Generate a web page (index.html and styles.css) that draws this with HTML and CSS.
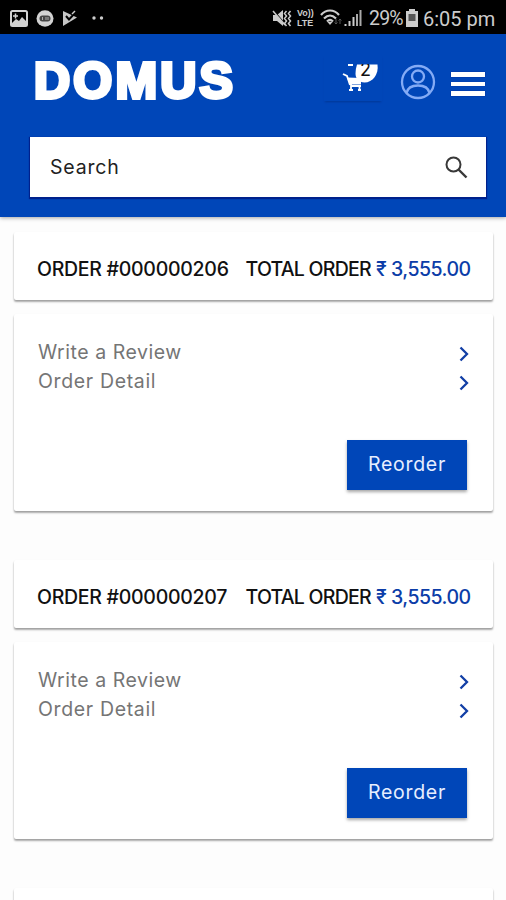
FILE: index.html
```html
<!DOCTYPE html>
<html lang="en">
<head>
<meta charset="utf-8">
<meta name="viewport" content="width=device-width, initial-scale=1">
<title>Domus - My Orders</title>
<link rel="stylesheet" href="styles.css">
</head>
<body>
<div class="status">
  <svg class="s-image" width="18" height="17" viewBox="0 0 18 17"><rect x="1" y="1" width="16" height="15" rx="1.500" fill="none" stroke="#d2d2d2" stroke-width="2"/><path d="M2 13l4-4 3 2 3-4 5 5v3H2z" fill="#d2d2d2"/><path d="M5.500 3.500v5M3 6h5" stroke="#d2d2d2" stroke-width="1.500"/></svg>
  <svg class="s-chat" width="18" height="17" viewBox="0 0 18 17"><ellipse cx="9" cy="8.500" rx="8.500" ry="8.300" fill="#d2d2d2"/><rect x="3.500" y="5.500" width="11" height="6" rx="3" fill="#444"/><path d="M6.500 7v3M10 7v3M12 7v3" stroke="#aaa"/></svg>
  <svg class="s-play" width="16" height="17" viewBox="0 0 16 17"><path d="M1 1l14 6.500L1 16z" fill="#c6c6c6"/><path d="M4 6l3 3.500L14 2" fill="none" stroke="#000" stroke-width="2"/><path d="M10 4l3-3" stroke="#ccc" stroke-width="1.500"/></svg>
  <svg class="s-dots" width="12" height="4" viewBox="0 0 12 4"><circle cx="2" cy="2" r="1.700" fill="#ccc"/><circle cx="9.500" cy="2" r="1.700" fill="#ccc"/></svg>
  <svg class="s-mute" width="20" height="19" viewBox="0 0 20 19"><path d="M1 6h4l6-5v16l-6-5H1z" fill="#ccc"/><path d="M2 2l11 13" stroke="#000" stroke-width="1.200"/><path d="M1 2l12 14" stroke="#ccc" stroke-width="1.500"/><path d="M14.500 2l-2 2.500 2 2.500-2 2.500 2 2.500-2 2.500 2 2.500M18.500 2l-2 2.500 2 2.500-2 2.500 2 2.500-2 2.500 2 2.500" fill="none" stroke="#ccc" stroke-width="1.500"/></svg>
  <div class="s-lte"><span class="vo">Vo))</span><span>LTE</span></div>
  <svg class="s-wifi" width="23" height="18" viewBox="0 0 23 18"><path d="M1 6c5-6 13-6 18 0M4 9.500c4-4 8-4 12 0M7 12.500c2-2 4-2 6 0" fill="none" stroke="#ccc" stroke-width="2.200"/><path d="M7.500 13L10 16l2.500-3z" fill="#ccc"/><path d="M16 10v5m-1.500-1.500L16 15l1.500-1.500M20 15v-5m-1.500 1.500L20 10l1.500 1.500" stroke="#555" fill="none"/></svg>
  <svg class="s-signal" width="18" height="18" viewBox="0 0 18 18"><path d="M1.500 15v2M5.500 12v5M9.500 8v9" stroke="#ccc" stroke-width="2"/><path d="M13 5v12M16.500 1v16" stroke="#aaa" stroke-width="2"/></svg>
  <span class="s-pct">29%</span>
  <svg class="s-batt" width="12" height="18" viewBox="0 0 12 18"><path d="M3 0h6v2h3v16H0V2h3z" fill="#ccc"/><path d="M2.500 5h7v7h-7z" fill="#555"/></svg>
  <span class="s-time">6:05 pm</span>
</div>

<header class="header">
  <div class="bar">
    <div class="logo">DOMUS</div>
    <div class="cart">
      <svg width="60" height="46" viewBox="0 0 60 46"><path d="M33 9.500h20.500c1.500 10-5 18-13 18-6 0-9-4-9-9 0-3 .5-6 1.500-9z" fill="#fff"/><path d="M24 10h5M19 19l4 2 3 9" fill="none" stroke="#fff" stroke-width="1.800"/><path d="M23 22.500l14 .5v6.500H26z" fill="#fff"/><path d="M27 29v6M27 31h10M25 35h4M34 35h3M35.500 31v4" fill="none" stroke="#fff" stroke-width="1.800"/></svg>
      <span class="count">2</span>
    </div>
    <svg class="user" width="36" height="36" viewBox="0 0 36 36" fill="none" stroke="#84abf5" stroke-width="2.300"><circle cx="18" cy="18" r="16"/><circle cx="18" cy="12.500" r="6"/><path d="M6.500 29c1-5 5-7.500 11.500-7.500S28.500 24 29.500 29"/></svg>
    <div class="menu"><i></i><i></i><i></i></div>
  </div>
  <div class="search">
    <span>Search</span>
    <svg width="23" height="23" viewBox="0 0 23 23" fill="none" stroke="#383838" stroke-width="2"><circle cx="8.500" cy="8.500" r="7"/><path d="M13.500 13.500l8 8" stroke-width="2.400"/></svg>
  </div>
</header>

<main class="orders">
  <section class="order">
    <div class="card summary"><span class="number">ORDER #000000206</span><span class="label">TOTAL ORDER</span><span class="price">₹ 3,555.00</span></div>
    <div class="card detail">
      <div class="row"><span class="review">Write a Review</span><svg width="10" height="16" viewBox="0 0 10 16"><path d="M1.500 1.500L8 8l-6.500 6.500"/></svg></div>
      <div class="row"><span class="info">Order Detail</span><svg width="10" height="16" viewBox="0 0 10 16"><path d="M1.500 1.500L8 8l-6.500 6.500"/></svg></div>
      <button class="reorder">Reorder</button>
    </div>
  </section>
  <section class="order">
    <div class="card summary"><span class="number">ORDER #000000207</span><span class="label">TOTAL ORDER</span><span class="price">₹ 3,555.00</span></div>
    <div class="card detail">
      <div class="row"><span class="review">Write a Review</span><svg width="10" height="16" viewBox="0 0 10 16"><path d="M1.500 1.500L8 8l-6.500 6.500"/></svg></div>
      <div class="row"><span class="info">Order Detail</span><svg width="10" height="16" viewBox="0 0 10 16"><path d="M1.500 1.500L8 8l-6.500 6.500"/></svg></div>
      <button class="reorder">Reorder</button>
    </div>
  </section>
  <section class="order next">
    <div class="card summary"></div>
  </section>
</main>
</body>
</html>
```

FILE: styles.css
```css
* { box-sizing: border-box; }
body {
  margin: 0;
  height: 900px;
  overflow: hidden;
  background: #fdfdfd;
  font-family: Inter, "Liberation Sans", sans-serif;
}
svg { display: block; flex: none; }

.status {
  height: 34px;
  display: flex;
  align-items: center;
  padding: 2px 0 0 10px;
  background: #000;
  color: #ccc;
  font-family: Roboto, sans-serif;
  font-size: 20px;
  white-space: nowrap;
}
.s-chat { margin-left: 8px; }
.s-play { margin-left: 8px; }
.s-dots { margin-left: 14px; }
.s-mute { margin-left: 168px; }
.s-lte {
  display: flex;
  flex-direction: column;
  gap: 1px;
  width: 20px;
  margin-left: 5px;
  font: 700 9px/9px "Liberation Sans", sans-serif;
}
.s-wifi { margin-left: 3px; }
.s-signal { margin-left: 1px; }
.s-pct { width: 35px; margin-left: 7px; font-size: 19.500px; letter-spacing: -0.800px; }
.s-batt { margin-left: 2px; }
.s-time { margin-left: 5px; }
.s-pct, .s-time { padding-top: 1px; }

.header {
  height: 183px;
  background: #0046b8;
  box-shadow: 0 1px 4px rgba(0, 0, 0, 0.35);
}
.bar {
  height: 103px;
  display: flex;
  align-items: flex-start;
  padding-left: 34px;
}
.logo {
  width: 204px;
  margin-top: 18px;
  color: #fff;
  font: 700 50px/58px "Liberation Sans", sans-serif;
  letter-spacing: 3.2px;
  -webkit-text-stroke: 3.8px #fff;
}
.cart {
  position: relative;
  width: 58px;
  height: 46px;
  margin: 21px 0 0 86px;
  box-shadow: 0 2px 2px -1px #003796;
}
.count {
  position: absolute;
  left: 36px;
  top: 5px;
  color: #111;
  font-size: 18px;
  line-height: 20px;
  clip-path: inset(4px 0 0);
}
.user { margin: 30px 0 0 18px; }
.menu {
  display: flex;
  flex-direction: column;
  gap: 5px;
  width: 34px;
  margin: 38px 0 0 15px;
}
.menu i { height: 4.500px; background: #fff; box-shadow: 0 0 1px #001d83; }
.search {
  display: flex;
  align-items: center;
  justify-content: space-between;
  width: 456px;
  height: 60px;
  margin-left: 30px;
  padding: 0 18px 0 20px;
  background: #fff;
  box-shadow: 0 1px 1px 1px #00218c;
  color: #222;
  font-size: 19.500px;
  letter-spacing: 0.800px;
}

.orders { height: 683px; overflow: hidden; padding: 15px 13px 0 14px; }
.order { height: 328px; }
.order.next { height: 12px; }
.card {
  background: #fff;
  border-radius: 2px;
  box-shadow: 0 2px 2px rgba(0, 0, 0, 0.3), 0 1px 2px rgba(0, 0, 0, 0.12);
}
.summary {
  display: flex;
  align-items: center;
  height: 68px;
  padding: 6px 0 0 23px;
  font-size: 19.500px;
  font-weight: 500;
  color: #111;
  white-space: nowrap;
}
.number { width: 208.500px; letter-spacing: -0.280px; }
.label { width: 130.500px; letter-spacing: -0.750px; }
.price { color: #0c3da8; letter-spacing: -0.500px; }
.detail {
  height: 197px;
  margin-top: 14px;
  padding: 23px 24px 0;
  color: #757575;
  font-size: 19.500px;
}
.row {
  display: flex;
  align-items: center;
  justify-content: space-between;
  height: 29.500px;
}
.row svg { margin-top: 4px; fill: none; stroke: #123fa6; stroke-width: 2.300; }
.review { letter-spacing: 0.540px; }
.info { letter-spacing: 0.650px; }
.reorder {
  display: block;
  width: 120px;
  height: 50px;
  margin: 44px 2px 0 auto;
  padding: 0 0 2px;
  border: 0;
  background: #0046b8;
  box-shadow: 0 2px 3px rgba(0, 0, 0, 0.35);
  color: #e6eeff;
  font: 19.500px Inter, sans-serif;
  letter-spacing: 0.700px;
}
```
